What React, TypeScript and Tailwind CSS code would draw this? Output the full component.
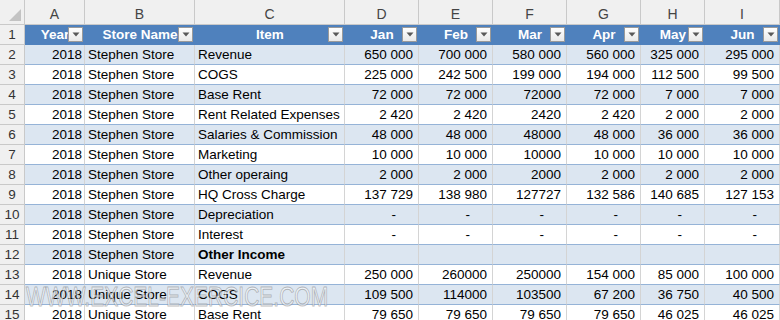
import type { ReactNode } from "react";

const COLS = ["A", "B", "C", "D", "E", "F", "G", "H", "I"];
const HEADERS = ["Year", "Store Name", "Item", "Jan", "Feb", "Mar", "Apr", "May", "Jun"];
const GRID = "grid grid-cols-[25px_60px_110px_150px_74px_74px_74px_74px_64px_75px]";

type Row = { store: string; item: string; values: string[]; bold?: boolean };

const DASHES = ["-", "-", "-", "-", "-", "-"];

const ROWS: Row[] = [
  { store: "Stephen Store", item: "Revenue", values: ["650 000", "700 000", "580 000", "560 000", "325 000", "295 000"] },
  { store: "Stephen Store", item: "COGS", values: ["225 000", "242 500", "199 000", "194 000", "112 500", "99 500"] },
  { store: "Stephen Store", item: "Base Rent", values: ["72 000", "72 000", "72000", "72 000", "7 000", "7 000"] },
  { store: "Stephen Store", item: "Rent Related Expenses", values: ["2 420", "2 420", "2420", "2 420", "2 000", "2 000"] },
  { store: "Stephen Store", item: "Salaries & Commission", values: ["48 000", "48 000", "48000", "48 000", "36 000", "36 000"] },
  { store: "Stephen Store", item: "Marketing", values: ["10 000", "10 000", "10000", "10 000", "10 000", "10 000"] },
  { store: "Stephen Store", item: "Other operaing", values: ["2 000", "2 000", "2000", "2 000", "2 000", "2 000"] },
  { store: "Stephen Store", item: "HQ Cross Charge", values: ["137 729", "138 980", "127727", "132 586", "140 685", "127 153"] },
  { store: "Stephen Store", item: "Depreciation", values: DASHES },
  { store: "Stephen Store", item: "Interest", values: DASHES },
  { store: "Stephen Store", item: "Other Income", values: ["", "", "", "", "", ""], bold: true },
  { store: "Unique Store", item: "Revenue", values: ["250 000", "260000", "250000", "154 000", "85 000", "100 000"] },
  { store: "Unique Store", item: "COGS", values: ["109 500", "114000", "103500", "67 200", "36 750", "40 500"] },
  { store: "Unique Store", item: "Base Rent", values: ["79 650", "79 650", "79 650", "79 650", "46 025", "46 025"] },
];

function FilterButton() {
  return (
    <span className="absolute right-[2px] top-[2px] flex h-[15px] w-[15px] items-center justify-center border border-[#9a9a9a] bg-gradient-to-b from-white to-[#e9e9e9]">
      <svg width="8" height="5" viewBox="0 0 8 5">
        <path d="M0.5 0.5h7L4 4.5z" fill="#595959" />
      </svg>
    </span>
  );
}

function RowNumber({ children }: { children: ReactNode }) {
  return (
    <div className="flex h-[20px] items-center justify-center border-r border-b border-[#c9c9c9] bg-[#f0f0f0] text-[#333]">
      {children}
    </div>
  );
}

function Cell({
  children,
  align = "left",
  banded,
  className = "",
}: {
  children?: ReactNode;
  align?: "left" | "right";
  banded: boolean;
  className?: string;
}) {
  return (
    <div
      className={`flex h-[20px] items-center overflow-hidden whitespace-nowrap border-r border-b border-r-[#d4d4d4] border-b-[#95b3d7] ${
        align === "right" ? "justify-end" : "justify-start pl-[3px]"
      } ${banded ? "bg-[#dce6f1]" : "bg-white"} ${className}`}
    >
      {children}
    </div>
  );
}

export default function App() {
  return (
    <div className="relative h-[320px] w-[780px] overflow-hidden bg-white font-['Liberation_Sans',Arial,sans-serif] text-[13.5px] leading-none text-black">
      <div className={`${GRID} h-[25px]`}>
        <div className="flex items-end justify-end border-r border-b border-[#c9c9c9] bg-[#f0f0f0] pr-[3px] pb-[3px]">
          <svg width="12" height="12" viewBox="0 0 12 12">
            <path d="M12 0V12H0z" fill="#c3c3c3" />
          </svg>
        </div>
        {COLS.map((c) => (
          <div
            key={c}
            className="flex items-center justify-center border-r border-b border-[#c9c9c9] bg-[#f0f0f0] pt-[4px] text-[14px] text-[#444]"
          >
            {c}
          </div>
        ))}
      </div>

      <div className={GRID}>
        <RowNumber>1</RowNumber>
        {HEADERS.map((h) => (
          <div
            key={h}
            className="relative flex h-[20px] items-center justify-center overflow-hidden whitespace-nowrap bg-[#4f81bd] font-bold text-white"
          >
            <span>{h}</span>
            <FilterButton />
          </div>
        ))}
      </div>

      {ROWS.map((r, i) => {
        const banded = i % 2 === 0;
        return (
          <div key={i} className={GRID}>
            <RowNumber>{i + 2}</RowNumber>
            <Cell align="right" banded={banded} className="pr-[2px]">
              2018
            </Cell>
            <Cell banded={banded}>{r.store}</Cell>
            <Cell banded={banded} className={r.bold ? "font-bold" : ""}>
              {r.item}
            </Cell>
            {r.values.map((v, j) => (
              <Cell
                key={j}
                align="right"
                banded={banded}
                className={v === "-" ? "pr-[22px]" : "pr-[5px]"}
              >
                {v}
              </Cell>
            ))}
          </div>
        );
      })}

      <div className="pointer-events-none absolute left-[26px] top-[283px] origin-left scale-x-[0.75] whitespace-nowrap font-['Liberation_Sans',Arial,sans-serif] text-[28px] leading-none text-white/50 [-webkit-text-stroke:1px_rgba(110,110,110,0.45)]">
        WWW.EXCEL-EXERCICE.COM
      </div>
    </div>
  );
}
